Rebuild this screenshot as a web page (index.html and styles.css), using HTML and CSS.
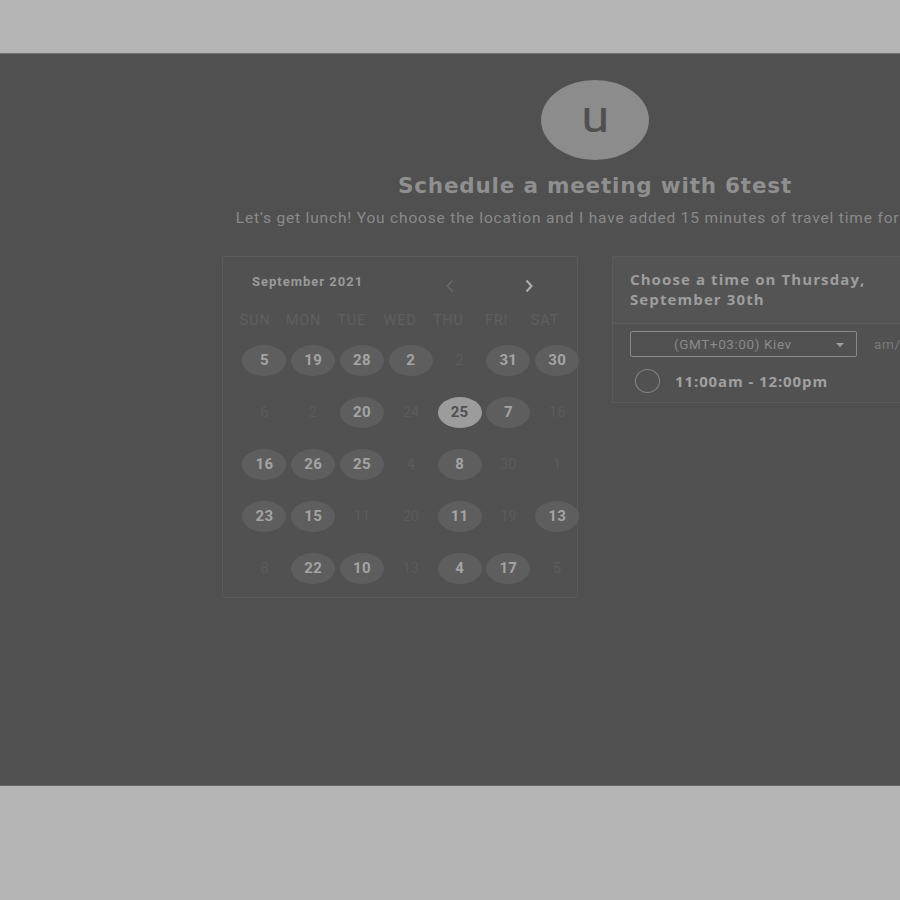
FILE: index.html
```html
<!DOCTYPE html>
<html>
<head>
<meta charset="utf-8">
<link rel="stylesheet" href="styles.css">
</head>
<body>
<div class="top-space"></div>
<div class="panel">
  <div class="inner">
    <div class="avatar"><span>u</span></div>
    <h1 class="title">Schedule a meeting with 6test</h1>
    <p class="subtitle">Let’s get lunch! You choose the location and I have added 15 minutes of travel time for you all</p>
    <div class="cards">
      <div class="calendar">
        <div class="cal-head">
          <span class="month">September 2021</span>
          <span class="arrow prev"><svg width="10" height="14" viewBox="0 0 10 14"><path d="M7.5 1.5 L2.5 7 L7.5 12.5" fill="none" stroke="currentColor" stroke-width="1.6"/></svg></span>
          <span class="arrow next"><svg width="10" height="14" viewBox="0 0 10 14"><path d="M2.5 1.5 L7.5 7 L2.5 12.5" fill="none" stroke="currentColor" stroke-width="2"/></svg></span>
        </div>
        <div class="weekdays">
          <span>SUN</span><span>MON</span><span>TUE</span><span>WED</span><span>THU</span><span>FRI</span><span>SAT</span>
        </div>
        <div class="days">
          <span class="day on">5</span><span class="day on">19</span><span class="day on">28</span><span class="day on">2</span><span class="day">2</span><span class="day on">31</span><span class="day on">30</span>
          <span class="day">6</span><span class="day">2</span><span class="day on">20</span><span class="day">24</span><span class="day sel">25</span><span class="day on">7</span><span class="day">16</span>
          <span class="day on">16</span><span class="day on">26</span><span class="day on">25</span><span class="day">4</span><span class="day on">8</span><span class="day">30</span><span class="day">1</span>
          <span class="day on">23</span><span class="day on">15</span><span class="day">11</span><span class="day">20</span><span class="day on">11</span><span class="day">19</span><span class="day on">13</span>
          <span class="day">8</span><span class="day on">22</span><span class="day on">10</span><span class="day">13</span><span class="day on">4</span><span class="day on">17</span><span class="day">5</span>
        </div>
      </div>
      <div class="times">
        <div class="times-head">Choose a time on Thursday,<br>September 30th</div>
        <div class="times-body">
          <div class="tz-row">
            <div class="tz-select"><span>(GMT+03:00) Kiev</span><svg class="caret" width="8" height="4" viewBox="0 0 8 4"><path d="M0 0 H8 L4 4 Z" fill="currentColor"/></svg></div>
            <span class="ampm">am/pm</span>
          </div>
          <div class="slot"><span class="radio"></span><span class="slot-text">11:00am - 12:00pm</span></div>
        </div>
      </div>
    </div>
  </div>
</div>
</body>
</html>
```
FILE: styles.css
```css
html, body {
  margin: 0;
  padding: 0;
  background: #b4b4b4;
  overflow: hidden;
}
body {
  font-family: Roboto, "Liberation Sans", sans-serif;
}
.top-space {
  height: 53px;
}
.panel {
  height: 731px;
  background: #505050;
  border-top: 1px solid #727272;
  border-bottom: 1px solid #6a6a6a;
  overflow: hidden;
}
.inner {
  width: 1190px;
  display: flex;
  flex-direction: column;
  align-items: center;
}
.avatar {
  margin-top: 26px;
  width: 108px;
  height: 80px;
  border-radius: 50%;
  background: #8c8c8c;
  display: flex;
  align-items: center;
  justify-content: center;
}
.avatar span {
  font-family: Roboto, sans-serif;
  font-size: 44px;
  color: #505050;
  line-height: 1;
  margin-top: -6px;
  transform: scaleX(1.15);
}
.title {
  margin: 12px 0 0;
  font-family: "DejaVu Sans", sans-serif;
  font-weight: 700;
  font-size: 21.5px;
  line-height: 28px;
  letter-spacing: 0.8px;
  color: #8f8f8f;
}
.subtitle {
  margin: 8px 0 0;
  font-size: 15.5px;
  line-height: 20px;
  letter-spacing: 0.83px;
  color: #8a8a8a;
  white-space: nowrap;
}
.cards {
  margin-top: 28px;
  display: flex;
  gap: 34px;
  align-items: flex-start;
}
.calendar {
  width: 354px;
  height: 340px;
  border: 1px solid #5a5a5a;
  background: #515151;
}
.cal-head {
  display: flex;
  align-items: center;
  height: 50px;
  padding-left: 29px;
}
.month {
  font-size: 13px;
  font-weight: 700;
  letter-spacing: 1px;
  color: #9a9a9a;
  width: 193px;
  margin-top: -1px;
}
.arrow {
  display: flex;
  align-items: center;
  margin-top: 8px;
}
.arrow.prev {
  color: #686868;
  width: 79px;
}
.arrow.next {
  color: #b0b0b0;
}
.weekdays {
  display: grid;
  grid-template-columns: repeat(7, 48.3px);
  padding-left: 8px;
  height: 24px;
  align-items: center;
  font-size: 14.5px;
  letter-spacing: 0.8px;
  color: #5e5e5e;
  margin-top: 1px;
}
.weekdays span {
  text-align: center;
}
.days {
  display: grid;
  grid-template-columns: repeat(7, 48.8px);
  grid-auto-rows: 52px;
  padding-left: 17px;
  margin-top: 2px;
  width: 342px;
}
.day {
  display: flex;
  align-items: center;
  justify-content: center;
  font-size: 14.5px;
  color: #5b5b5b;
}
.day.on, .day.sel {
  width: 44px;
  height: 31px;
  border-radius: 50%;
  justify-self: center;
  align-self: center;
  background: #5e5e5e;
  color: #a4a4a4;
  font-weight: 700;
  font-size: 15px;
  letter-spacing: 0.3px;
}
.day.sel {
  background: #9c9c9c;
  color: #505050;
}
.times {
  width: 354px;
  border: 1px solid #5a5a5a;
  background: #515151;
}
.times-head {
  background: #545454;
  border-bottom: 1px solid #5c5c5c;
  padding: 12px 17px 14px;
  font-family: "Open Sans", sans-serif;
  font-size: 15px;
  font-weight: 700;
  line-height: 20px;
  color: #9e9e9e;
  letter-spacing: 1.1px;
}
.times-body {
  padding: 7px 17px 0;
  height: 71px;
}
.tz-row {
  display: flex;
  align-items: center;
}
.tz-select {
  width: 225px;
  height: 24px;
  border: 1px solid #8a8a8a;
  border-radius: 2px;
  display: flex;
  align-items: center;
  position: relative;
  font-size: 13.5px;
  letter-spacing: 0.6px;
  color: #8a8a8a;
}
.tz-select span {
  margin-left: 43px;
}
.tz-select .caret {
  position: absolute;
  right: 12px;
  top: 11px;
  color: #a0a0a0;
}
.ampm {
  margin-left: 17px;
  font-size: 13.5px;
  letter-spacing: 0.6px;
  color: #7a7a7a;
}
.slot {
  display: flex;
  align-items: center;
  margin-top: 12px;
  padding-left: 5px;
}
.radio {
  border: 1.5px solid #858585;
  border-radius: 50%;
  box-sizing: border-box;
  width: 25px;
  height: 24px;
}
.slot-text {
  margin-left: 15px;
  font-family: "Open Sans", sans-serif;
  font-size: 15px;
  font-weight: 700;
  letter-spacing: 0.9px;
  color: #a0a0a0;
}
```
